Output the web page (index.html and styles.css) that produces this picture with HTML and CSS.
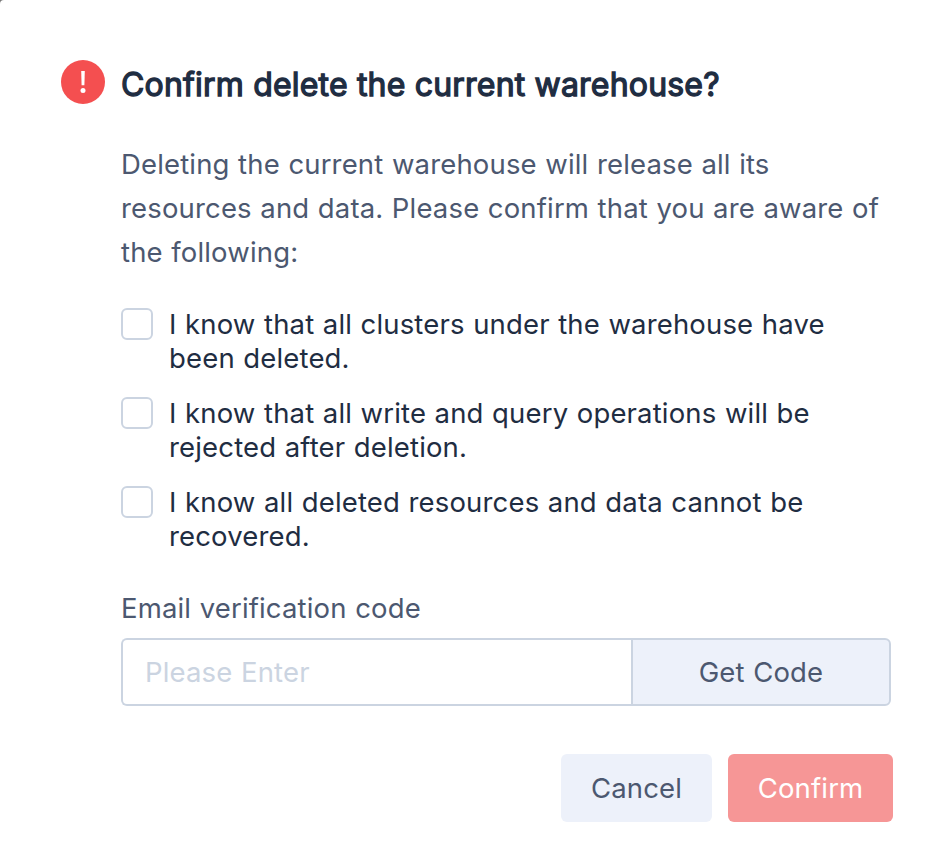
FILE: index.html
```html
<!DOCTYPE html>
<html lang="en">
<head>
<meta charset="utf-8">
<title>Delete warehouse</title>
<link rel="stylesheet" href="styles.css">
</head>
<body>
<main class="dialog">
  <svg class="alert" viewBox="0 0 44 44" aria-hidden="true">
    <circle cx="22" cy="22" r="22" fill="#f44f50"/>
    <path d="M20.2 11h3.6l-.4 14.3h-2.8z" fill="#fff"/>
    <circle cx="22" cy="30.5" r="2.5" fill="#fff"/>
  </svg>
  <div class="content">
    <h1 class="title">Confirm delete the current warehouse?</h1>
    <p class="message">Deleting the current warehouse will release all its<br>resources and data. Please confirm that you are aware of<br>the following:</p>
    <div class="checks">
      <label class="check"><input type="checkbox" class="box"><span>I know that all clusters under the warehouse have<br>been deleted.</span></label>
      <label class="check"><input type="checkbox" class="box"><span>I know that all write and query operations will be<br>rejected after deletion.</span></label>
      <label class="check"><input type="checkbox" class="box"><span>I know all deleted resources and data cannot be<br>recovered.</span></label>
    </div>
    <label class="field-label" for="code">Email verification code</label>
    <div class="code-row">
      <input id="code" class="code" type="text" placeholder="Please Enter">
      <button class="get-code">Get Code</button>
    </div>
    <div class="actions">
      <button class="btn cancel">Cancel</button>
      <button class="btn confirm">Confirm</button>
    </div>
  </div>
</main>
</body>
</html>
```
FILE: styles.css
```css
* { box-sizing: border-box; }
html { background: #777; }
body {
  margin: 0;
  font-family: Inter, sans-serif;
  font-size: 27.5px;
  letter-spacing: 0.16px;
  word-spacing: 0.6px;
  color: #1f2d42;
}
.dialog {
  display: flex;
  align-items: flex-start;
  gap: 16px;
  height: 864px;
  padding: 60px 57px 0 61px;
  background: #fff;
  border-top-left-radius: 4px;
}
.alert { width: 44px; height: 44px; flex: none; }
.content { flex: 1; }
.title {
  margin: 0;
  font-size: 32px;
  line-height: 50px;
  font-weight: 400;
  letter-spacing: 0.19px;
  word-spacing: 0;
  -webkit-text-stroke: 1.3px currentColor;
}
.message {
  margin: 32px 0 0;
  line-height: 44px;
  white-space: nowrap;
  color: #4c5870;
}
.checks {
  display: grid;
  gap: 21px;
  margin-top: 33px;
}
.check {
  display: flex;
  gap: 16px;
  line-height: 34px;
}
.box {
  appearance: none;
  flex: none;
  width: 32px;
  height: 32px;
  margin: 1px 0 0;
  border: 2px solid #cbd4e1;
  border-radius: 6px;
  background: #fff;
}
.field-label {
  display: block;
  margin-top: 38px;
  line-height: 34px;
  color: #4c5870;
}
.code-row {
  display: flex;
  width: 770px;
  height: 68px;
  margin-top: 13px;
}
.code, .get-code, .btn {
  font: inherit;
  letter-spacing: inherit;
  word-spacing: inherit;
}
.code {
  width: 510px;
  padding: 0 22px;
  border: 2px solid #cbd4e1;
  border-right: 0;
  border-radius: 6px 0 0 6px;
  background: #fff;
}
.code::placeholder { color: #cbd4e1; opacity: 1; }
.get-code {
  flex: 1;
  border: 2px solid #cbd4e1;
  border-radius: 0 6px 6px 0;
  background: #edf1fa;
  color: #4c5870;
}
.actions {
  display: flex;
  justify-content: flex-end;
  gap: 16px;
  margin-top: 48px;
}
.btn {
  height: 68px;
  padding: 0;
  border: 0;
  border-radius: 6px;
}
.cancel { width: 151px; background: #edf1fa; color: #4c5870; }
.confirm { width: 165px; background: #f69696; color: #fff; }
```
